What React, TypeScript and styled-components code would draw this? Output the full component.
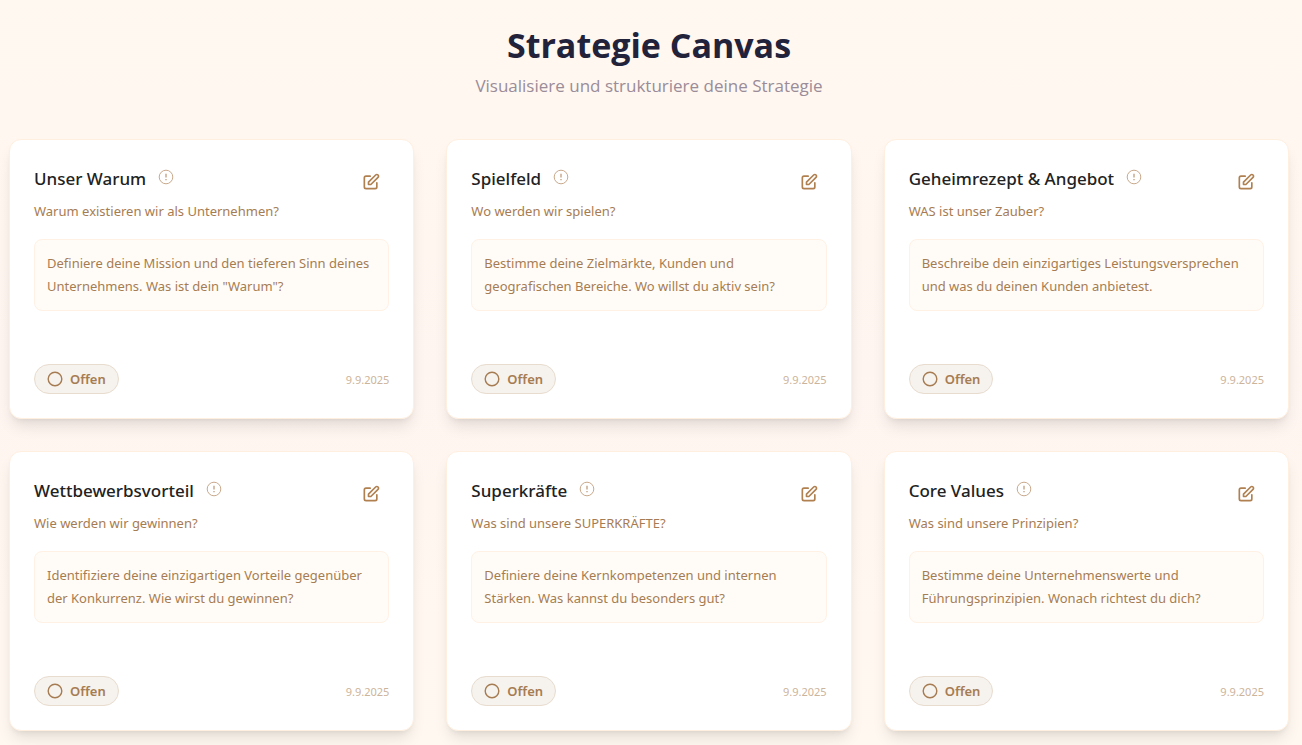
import React from 'react';
import styled, { createGlobalStyle } from 'styled-components';

const GlobalStyle = createGlobalStyle`
  *, *::before, *::after { box-sizing: border-box; }
  body {
    margin: 0;
    font-family: 'Segoe UI', 'Noto Sans', 'Open Sans', sans-serif;
    color: #222222;
  }
  h1, h2, p { margin: 0; }
  button { font-family: inherit; }
`;

const Page = styled.main`
  min-height: 100vh;
  padding: 20px 13px 14px 9px;
  background: linear-gradient(180deg, #fff8f0 0%, #fff5f0 50%, #fff8f0 100%);
`;

const Content = styled.div`
  max-width: 1280px;
  margin: 0 auto;
`;

const Header = styled.header`
  margin-bottom: 40px;
  text-align: center;
`;

const Title = styled.h1`
  margin-bottom: 2px;
  font-family: 'Segoe UI', 'Open Sans', 'Noto Sans', sans-serif;
  font-size: 34px;
  font-weight: 700;
  line-height: 50px;
  color: #22223b;
`;

const Subtitle = styled.p`
  font-family: 'Segoe UI', 'Open Sans', 'Noto Sans', sans-serif;
  font-size: 17px;
  line-height: 27px;
  color: #9a8c98;
`;

const Grid = styled.section`
  display: grid;
  grid-template-columns: repeat(auto-fit, minmax(320px, 1fr));
  gap: 32px;
`;

const Card = styled.article`
  display: flex;
  flex-direction: column;
  min-height: 280px;
  padding: 24px;
  border: 1px solid #ffefdf;
  border-radius: 12px;
  background: #ffffff;
  box-shadow: 0 10px 15px -3px rgba(0, 0, 0, 0.1), 0 4px 6px -4px rgba(0, 0, 0, 0.1);
`;

const CardHead = styled.div`
  display: flex;
  justify-content: space-between;
  align-items: flex-start;
  margin-bottom: 16px;
`;

const TitleRow = styled.div`
  display: flex;
  align-items: flex-start;
  gap: 12px;
  margin-bottom: 6px;
`;

const CardTitle = styled.h2`
  font-size: 17px;
  font-weight: 500;
  line-height: 30px;
`;

const InfoButton = styled.button`
  display: flex;
  padding: 5px 0;
  border: 0;
  background: none;
  color: #c9a98c;
  cursor: pointer;
`;

const Question = styled.p`
  font-size: 13px;
  line-height: 23px;
  color: #a67c52;
`;

const EditButton = styled.button`
  display: flex;
  padding: 8px;
  border: 0;
  border-radius: 8px;
  background: none;
  color: #b08050;
  cursor: pointer;
`;

const Hint = styled.p`
  padding: 12px;
  border: 1px solid #fff1e4;
  border-radius: 8px;
  background: #fffcf8;
  font-size: 13px;
  line-height: 23px;
  color: #a67c52;
`;

const CardFoot = styled.div`
  display: flex;
  justify-content: space-between;
  align-items: center;
  margin-top: auto;
`;

const Status = styled.button`
  display: flex;
  align-items: center;
  gap: 7px;
  height: 30px;
  padding: 0 12px;
  border: 1px solid #e8dccf;
  border-radius: 15px;
  background: #f6f2ed;
  font-size: 13px;
  font-weight: 600;
  color: #a67c52;
  cursor: pointer;
`;

const DateText = styled.time`
  font-size: 11px;
  color: #ccb49b;
`;

const EditIcon = () => (
  <svg width="20" height="20" viewBox="0 0 24 24" fill="none" stroke="currentColor" strokeWidth="2" strokeLinecap="round" strokeLinejoin="round" aria-hidden="true">
    <path d="M11 5H6a2 2 0 0 0-2 2v11a2 2 0 0 0 2 2h11a2 2 0 0 0 2-2v-5" />
    <path d="M17.586 3.586a2 2 0 1 1 2.828 2.828L11.828 15H9v-2.828l8.586-8.586z" />
  </svg>
);

const InfoIcon = () => (
  <svg width="16" height="16" viewBox="0 0 16 16" fill="none" stroke="currentColor" aria-hidden="true">
    <circle cx="8" cy="8" r="6.8" />
    <path d="M8 4.7v3.8M8 10v1.2" strokeWidth="1.5" />
  </svg>
);

const OpenIcon = () => (
  <svg width="16" height="16" viewBox="0 0 16 16" fill="none" stroke="currentColor" strokeWidth="1.4" aria-hidden="true">
    <circle cx="8" cy="8" r="6.8" />
  </svg>
);

interface Field {
  title: string;
  question: string;
  hint: string;
}

const fields: Field[] = [
  { title: 'Unser Warum', question: 'Warum existieren wir als Unternehmen?', hint: 'Definiere deine Mission und den tieferen Sinn deines Unternehmens. Was ist dein "Warum"?' },
  { title: 'Spielfeld', question: 'Wo werden wir spielen?', hint: 'Bestimme deine Zielmärkte, Kunden und geografischen Bereiche. Wo willst du aktiv sein?' },
  { title: 'Geheimrezept & Angebot', question: 'WAS ist unser Zauber?', hint: 'Beschreibe dein einzigartiges Leistungsversprechen und was du deinen Kunden anbietest.' },
  { title: 'Wettbewerbsvorteil', question: 'Wie werden wir gewinnen?', hint: 'Identifiziere deine einzigartigen Vorteile gegenüber der Konkurrenz. Wie wirst du gewinnen?' },
  { title: 'Superkräfte', question: 'Was sind unsere SUPERKRÄFTE?', hint: 'Definiere deine Kernkompetenzen und internen Stärken. Was kannst du besonders gut?' },
  { title: 'Core Values', question: 'Was sind unsere Prinzipien?', hint: 'Bestimme deine Unternehmenswerte und Führungsprinzipien. Wonach richtest du dich?' },
];

const FieldCard = ({ title, question, hint }: Field) => (
  <Card>
    <CardHead>
      <div>
        <TitleRow>
          <CardTitle>{title}</CardTitle>
          <InfoButton type="button" aria-label={`Info: ${title}`}><InfoIcon /></InfoButton>
        </TitleRow>
        <Question>{question}</Question>
      </div>
      <EditButton type="button" aria-label={`${title} bearbeiten`}><EditIcon /></EditButton>
    </CardHead>
    <Hint>{hint}</Hint>
    <CardFoot>
      <Status type="button"><OpenIcon />Offen</Status>
      <DateText dateTime="2025-09-09">9.9.2025</DateText>
    </CardFoot>
  </Card>
);

export default function App() {
  return (
    <>
      <GlobalStyle />
      <Page>
        <Content>
          <Header>
            <Title>Strategie Canvas</Title>
            <Subtitle>Visualisiere und strukturiere deine Strategie</Subtitle>
          </Header>
          <Grid>
            {fields.map((field) => <FieldCard key={field.title} {...field} />)}
          </Grid>
        </Content>
      </Page>
    </>
  );
}
